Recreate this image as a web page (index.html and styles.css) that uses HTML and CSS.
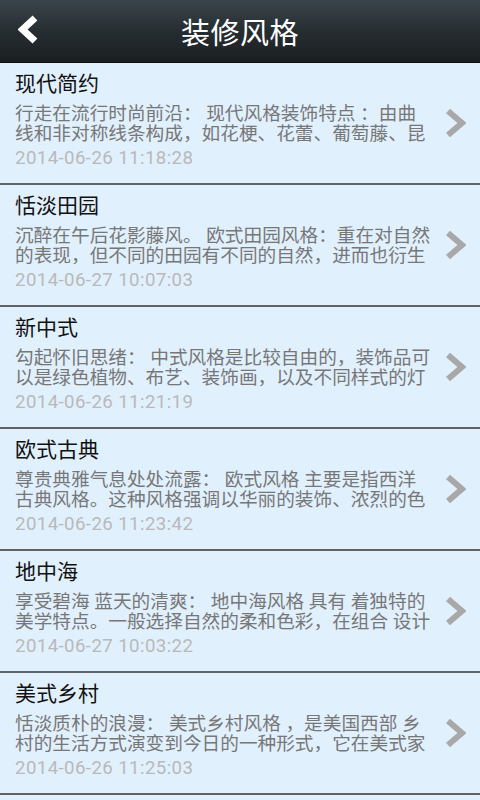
FILE: index.html
```html
<!DOCTYPE html>
<html lang="zh-CN">
<head>
    <meta charset="UTF-8">
    <meta name="viewport" content="width=device-width, initial-scale=1.0">
    <title>装修风格</title>
    <link rel="stylesheet" href="styles.css">
</head>
<body>

    <!-- Barre du haut -->
    <div class="header">
        <svg class="back" width="21" height="29" viewBox="0 0 21 29">
            <polyline points="17,3 4.5,14.5 17,26" fill="none" stroke="#fff" stroke-width="7" stroke-linejoin="miter"/>
        </svg>
        <h1>装修风格</h1>
    </div>

    <!-- Liste des styles -->
    <ul class="list">
        <li class="item">
            <div class="texte">
                <h2>现代简约</h2>
                <p class="desc">行走在流行时尚前沿： 现代风格装饰特点 ：由曲线和非对称线条构成，如花梗、花蕾、葡萄藤、昆</p>
                <p class="date">2014-06-26 11:18:28</p>
            </div>
            <svg class="arrow" width="21" height="28" viewBox="0 0 21 28">
                <polyline points="3,2 17,14 3,26" fill="none" stroke="#a8a8a8" stroke-width="6"/>
            </svg>
        </li>
        <li class="item">
            <div class="texte">
                <h2>恬淡田园</h2>
                <p class="desc">沉醉在午后花影藤风。 欧式田园风格：重在对自然的表现，但不同的田园有不同的自然，进而也衍生</p>
                <p class="date">2014-06-27 10:07:03</p>
            </div>
            <svg class="arrow" width="21" height="28" viewBox="0 0 21 28">
                <polyline points="3,2 17,14 3,26" fill="none" stroke="#a8a8a8" stroke-width="6"/>
            </svg>
        </li>
        <li class="item">
            <div class="texte">
                <h2>新中式</h2>
                <p class="desc">勾起怀旧思绪： 中式风格是比较自由的，装饰品可以是绿色植物、布艺、装饰画，以及不同样式的灯</p>
                <p class="date">2014-06-26 11:21:19</p>
            </div>
            <svg class="arrow" width="21" height="28" viewBox="0 0 21 28">
                <polyline points="3,2 17,14 3,26" fill="none" stroke="#a8a8a8" stroke-width="6"/>
            </svg>
        </li>
        <li class="item">
            <div class="texte">
                <h2>欧式古典</h2>
                <p class="desc">尊贵典雅气息处处流露： 欧式风格 主要是指西洋古典风格。这种风格强调以华丽的装饰、浓烈的色</p>
                <p class="date">2014-06-26 11:23:42</p>
            </div>
            <svg class="arrow" width="21" height="28" viewBox="0 0 21 28">
                <polyline points="3,2 17,14 3,26" fill="none" stroke="#a8a8a8" stroke-width="6"/>
            </svg>
        </li>
        <li class="item">
            <div class="texte">
                <h2>地中海</h2>
                <p class="desc">享受碧海 蓝天的清爽： 地中海风格 具有 着独特的美学特点。一般选择自然的柔和色彩，在组合 设计</p>
                <p class="date">2014-06-27 10:03:22</p>
            </div>
            <svg class="arrow" width="21" height="28" viewBox="0 0 21 28">
                <polyline points="3,2 17,14 3,26" fill="none" stroke="#a8a8a8" stroke-width="6"/>
            </svg>
        </li>
        <li class="item">
            <div class="texte">
                <h2>美式乡村</h2>
                <p class="desc">恬淡质朴的浪漫： 美式乡村风格 ，是美国西部 乡村的生活方式演变到今日的一种形式，它在美式家</p>
                <p class="date">2014-06-26 11:25:03</p>
            </div>
            <svg class="arrow" width="21" height="28" viewBox="0 0 21 28">
                <polyline points="3,2 17,14 3,26" fill="none" stroke="#a8a8a8" stroke-width="6"/>
            </svg>
        </li>
    </ul>

</body>
</html>
```

FILE: styles.css
```css
body {
    margin: 0;
    font-family: Roboto, "Noto Sans CJK SC", sans-serif;
    background-color: #e1f0fd;
    height: 800px;
    overflow: hidden;
}

/* Barre du haut */
.header {
    height: 62px;
    display: flex;
    align-items: center;
    justify-content: center;
    position: relative;
    background: linear-gradient(to bottom, #3a454b, #262d31 50%, #1b1f22);
    border-bottom: 1px solid #0c0e0f;
}

.header h1 {
    margin: 0;
    font-size: 29px;
    font-weight: normal;
    color: white;
    letter-spacing: 0.5px;
}

.back {
    position: absolute;
    left: 18px;
    top: 15px;
}

/* Liste */
.list {
    list-style: none;
    margin: 0;
    padding: 0;
}

.item {
    height: 120px;
    display: flex;
    align-items: center;
    padding: 0 14px 0 15px;
    border-bottom: 2px solid #5f6366;
}

.texte {
    width: 418px;
    height: 120px;
    padding-top: 10px;
    box-sizing: border-box;
}

.item h2 {
    margin: 0;
    font-size: 21px;
    line-height: 23px;
    font-weight: normal;
    color: #111;
}

.desc {
    margin: 8px 0 0;
    font-size: 18.67px;
    line-height: 20px;
    color: #777;
}

.date {
    margin: 3px 0 0;
    font-size: 18.67px;
    line-height: 22px;
    letter-spacing: 0.4px;
    color: #b9b9b9;
}

.arrow {
    margin-left: auto;
}
```
